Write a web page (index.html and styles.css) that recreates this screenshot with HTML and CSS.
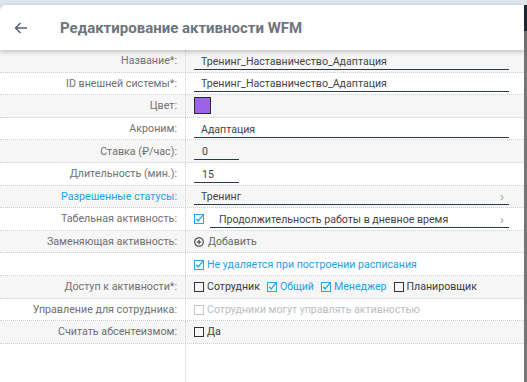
FILE: index.html
```html
<!DOCTYPE html>
<html lang="ru">
<head>
<meta charset="utf-8">
<title>Редактирование активности WFM</title>
<link rel="stylesheet" href="styles.css">
</head>
<body>
<div class="app">
  <div class="main">
    <div class="topstrip"></div>
    <header class="header">
      <span class="back">
        <svg width="14" height="12" viewBox="0 0 14 12"><path d="M13 6H1.5M6.5 1L1.5 6l5 5" fill="none" stroke="#58616b" stroke-width="1.5"/></svg>
      </span>
      <h1 class="title">Редактирование активности WFM</h1>
    </header>
    <div class="form">
      <div class="row">
        <div class="label">Название*:</div>
        <div class="value"><div class="input wide">Тренинг_Наставничество_Адаптация</div></div>
      </div>
      <div class="row">
        <div class="label">ID внешней системы*:</div>
        <div class="value"><div class="input wide">Тренинг_Наставничество_Адаптация</div></div>
      </div>
      <div class="row">
        <div class="label">Цвет:</div>
        <div class="value"><span class="swatch"></span></div>
      </div>
      <div class="row">
        <div class="label">Акроним:</div>
        <div class="value"><div class="input wide">Адаптация</div></div>
      </div>
      <div class="row">
        <div class="label">Ставка (₽/час):</div>
        <div class="value"><div class="input short">0</div></div>
      </div>
      <div class="row">
        <div class="label">Длительность (мин.):</div>
        <div class="value"><div class="input short">15</div></div>
      </div>
      <div class="row">
        <div class="label link">Разрешенные статусы:</div>
        <div class="value"><div class="input wide select"><span>Тренинг</span><span class="chev">›</span></div></div>
      </div>
      <div class="row">
        <div class="label">Табельная активность:</div>
        <div class="value">
          <span class="cb checked"><svg width="10" height="10" viewBox="0 0 10 10"><rect x="0.5" y="0.5" width="9" height="9" fill="none" stroke="#2aa5ec"/><path d="M2.2 4.8l2 2.2L8.8 1.2" fill="none" stroke="#2aa5ec" stroke-width="1.3"/></svg></span>
          <div class="input grow select"><span>Продолжительность работы в дневное время</span><span class="chev">›</span></div>
        </div>
      </div>
      <div class="row">
        <div class="label">Заменяющая активность:</div>
        <div class="value"><span class="add"><svg width="10" height="10" viewBox="0 0 10 10"><circle cx="5" cy="5" r="4.3" fill="none" stroke="#333" stroke-width="1.1"/><path d="M5 2.8v4.4M2.8 5h4.4" stroke="#333" stroke-width="1.1"/></svg></span><span class="addtext">Добавить</span></div>
      </div>
      <div class="row">
        <div class="label"></div>
        <div class="value blue"><span class="cb"><svg width="10" height="10" viewBox="0 0 10 10"><rect x="0.5" y="0.5" width="9" height="9" fill="none" stroke="#2aa5ec"/><path d="M2.2 4.8l2 2.2L8.8 1.2" fill="none" stroke="#2aa5ec" stroke-width="1.3"/></svg></span>Не удаляется при построении расписания</div>
      </div>
      <div class="row">
        <div class="label">Доступ к активности*:</div>
        <div class="value checks">
          <span class="opt"><span class="cb"><svg width="10" height="10" viewBox="0 0 10 10"><rect x="0.5" y="0.5" width="9" height="9" fill="none" stroke="#333"/></svg></span>Сотрудник</span>
          <span class="opt blue"><span class="cb"><svg width="10" height="10" viewBox="0 0 10 10"><rect x="0.5" y="0.5" width="9" height="9" fill="none" stroke="#2aa5ec"/><path d="M2.2 4.8l2 2.2L8.8 1.2" fill="none" stroke="#2aa5ec" stroke-width="1.3"/></svg></span>Общий</span>
          <span class="opt blue"><span class="cb"><svg width="10" height="10" viewBox="0 0 10 10"><rect x="0.5" y="0.5" width="9" height="9" fill="none" stroke="#2aa5ec"/><path d="M2.2 4.8l2 2.2L8.8 1.2" fill="none" stroke="#2aa5ec" stroke-width="1.3"/></svg></span>Менеджер</span>
          <span class="opt"><span class="cb"><svg width="10" height="10" viewBox="0 0 10 10"><rect x="0.5" y="0.5" width="9" height="9" fill="none" stroke="#333"/></svg></span>Планировщик</span>
        </div>
      </div>
      <div class="row">
        <div class="label">Управление для сотрудника:</div>
        <div class="value disabled"><span class="cb"><svg width="10" height="10" viewBox="0 0 10 10"><rect x="0.5" y="0.5" width="9" height="9" fill="none" stroke="#c4c7ca"/></svg></span>Сотрудники могут управлять активностью</div>
      </div>
      <div class="row">
        <div class="label">Считать абсентеизмом:</div>
        <div class="value"><span class="cb"><svg width="10" height="10" viewBox="0 0 10 10"><rect x="0.5" y="0.5" width="9" height="9" fill="none" stroke="#333"/></svg></span>Да</div>
      </div>
      <div class="filler"><div class="filler-label"></div></div>
    </div>
  </div>
  <div class="edge"><div class="edge-top"></div><div class="edge-dark"></div><div class="edge-rest"></div></div>
</div>
</body>
</html>
```

FILE: styles.css
```css
* { box-sizing: border-box; }
html, body { margin: 0; padding: 0; height: 100%; overflow: hidden; }
body {
  font-family: Roboto, "Noto Sans", Arial, sans-serif;
  font-size: 10.6px;
  color: #3d3d3d;
  background: #fff;
}
.app { display: flex; height: 382px; }
.main { flex: 1; display: flex; flex-direction: column; min-width: 0; background: #dde5ec; }
.topstrip { height: 5px; background: #dde5ec; }
.header {
  height: 45px;
  background: #fff;
  border-top-left-radius: 6px;
  display: flex;
  align-items: center;
  box-shadow: 0 2px 5px rgba(0,0,0,0.22);
  position: relative;
  z-index: 2;
}
.back { width: 60px; padding-left: 14px; display: flex; align-items: center; height: 12px; }
.title {
  margin: 0;
  font-size: 15px;
  font-weight: 700;
  color: #6c7580;
}
.form { flex: 1; display: flex; flex-direction: column; background: #fff; }
.row {
  display: flex;
  height: 22.6px;
  border-bottom: 1px dotted #cfcfcf;
}
.row:nth-child(odd) { background: #f6f6f6; }
.row:nth-child(even) { background: #fff; }
.label {
  width: 186px;
  flex: none;
  font-size: 10.7px;
  padding-right: 8px;
  border-right: 1px dotted #d4d4d4;
  color: #707070;
  display: flex;
  align-items: center;
  justify-content: flex-end;
  white-space: nowrap;
}
.label.link { color: #1ea0ea; }
.value {
  flex: 1;
  display: flex;
  align-items: center;
  padding-left: 8px;
  padding-right: 15px;
  white-space: nowrap;
  color: #3a3a3a;
}
.input {
  height: 18px;
  border-bottom: 1.5px solid #2d3a46;
  padding-left: 7px;
  padding-top: 2px;
  display: flex;
  align-items: center;
  color: #444;
}
.input.wide { flex: 1; }
.input.short { width: 45px; padding-left: 8px; }
.input.grow { flex: 1; padding-left: 9px; margin-left: 3px; }
.select { justify-content: space-between; padding-right: 5px; }
.chev { color: #9a9a9a; font-size: 13px; line-height: 1; }
.swatch {
  width: 17px; height: 17px;
  background: #9b62ea;
  border: 1.5px solid #2b2b2b;
}
.cb { display: inline-flex; width: 10px; height: 10px; margin-right: 3px; margin-top: 1px; }
.cb svg { display: block; }
.add { display: inline-flex; margin-right: 4px; }
.addtext { color: #666; }
.blue { color: #1ea0ea; }
.disabled { color: #b9bdc1; }
.opt { display: inline-flex; align-items: center; margin-right: 7px; }
.filler { flex: 1; display: flex; background: #fff; }
.filler-label { width: 186px; border-right: 1px solid #e4e4e4; }
.edge { width: 3px; display: flex; flex-direction: column; }
.edge-top { height: 5px; background: #dde5ec; }
.edge-dark { height: 26px; background: #1e2833; }
.edge-rest { flex: 1; background: #767676; }
```
